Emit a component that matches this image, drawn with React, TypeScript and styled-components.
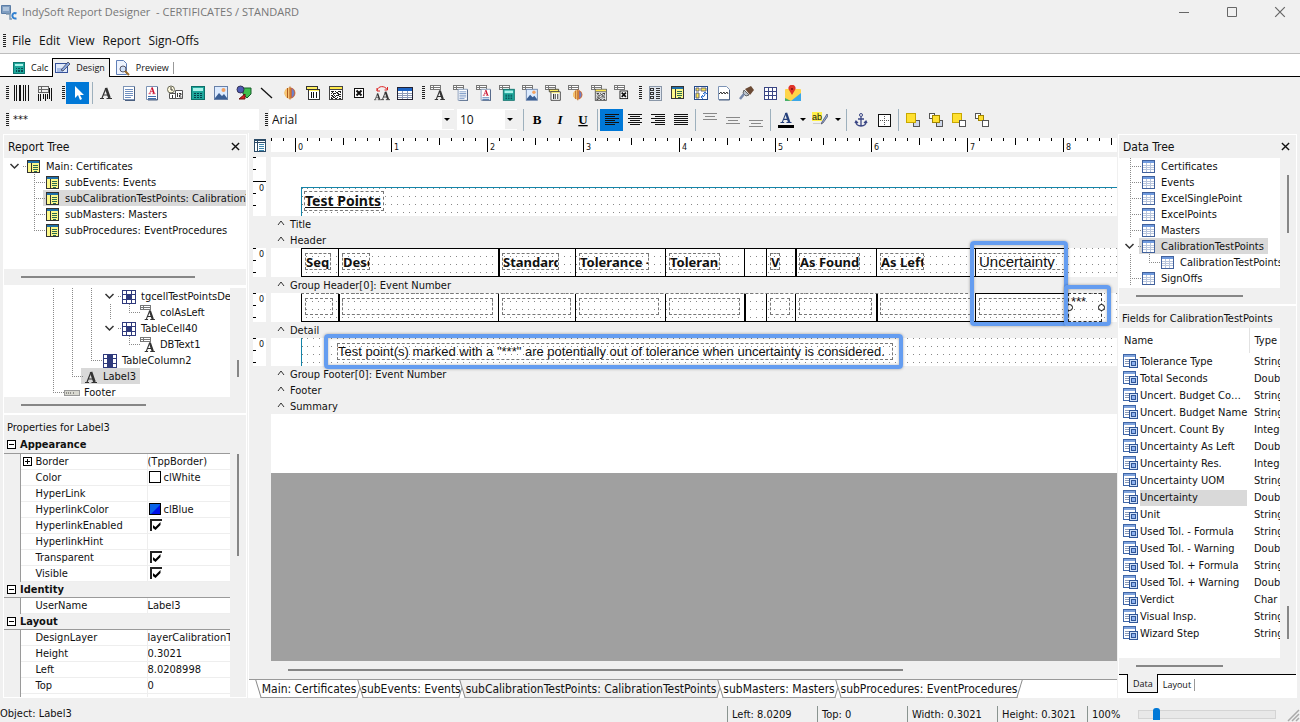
import React from "react";
import styled, { createGlobalStyle, css } from "styled-components";

const ui = `"DejaVu Sans Condensed", "DejaVu Sans", sans-serif`;
const chrome = `"Open Sans", "Noto Sans", sans-serif`;

const GlobalStyle = createGlobalStyle`
  * { box-sizing: border-box; }
  body { margin: 0; background: #f0f0f0; color: #111; font: 11px/16px ${ui}; }
  button, input, select { font: inherit; color: inherit; margin: 0; padding: 0; border: 0; background: none; border-radius: 0; }
`;

/* ---------- shell ---------- */

const Window = styled.div`
  display: flex;
  flex-direction: column;
  height: 100vh;
  min-height: 600px;
  overflow: hidden;
`;

const TitleBar = styled.header`
  display: flex;
  align-items: center;
  flex: none;
  height: 28px;
  padding-bottom: 4px;
  color: #777;
  font: 11px/18px ${chrome};
`;

const TitleText = styled.h1`
  flex: 1;
  margin: 0 0 0 4px;
  font: inherit;
  white-space: pre;
`;

const WindowButton = styled.button`
  display: flex;
  align-items: center;
  justify-content: center;
  width: 48px;
  height: 24px;
  color: #666;
`;

const WindowButtons = styled.div`
  display: flex;
  margin-right: -4px;
`;

const MenuBar = styled.nav`
  display: flex;
  align-items: center;
  flex: none;
  height: 26px;
  border-bottom: 1px solid #bdbdbd;
  font: 12px/18px ${chrome};
`;

const MenuItem = styled.button`
  padding: 0 4px;
`;

const Grip = styled.span<{ $short?: boolean }>`
  flex: none;
  width: 3px;
  height: 14px;
  margin: 0 1px 0 6px;
  background: repeating-linear-gradient(#222 0 1px, transparent 1px 2px);
  ${(p) => p.$short && css`margin: 0 2px 0 3px;`}
`;

const ViewTabs = styled.div`
  display: flex;
  align-items: flex-end;
  flex: none;
  height: 23px;
  padding-left: 7px;
  background: #fff;
  border-bottom: 1px solid #000;
  font: 9px/14px ${chrome};
`;

const ViewTab = styled.button<{ $active?: boolean }>`
  display: flex;
  align-items: center;
  gap: 5px;
  height: 18px;
  padding: 1px 4px 0 5px;
  ${(p) =>
    p.$active &&
    css`
      margin-bottom: -1px;
      height: 19px;
      padding: 0 4px 1px 2px;
      background: #f0f0f0;
      border: 1px solid #000;
      border-bottom: 0;
    `}
`;

const TabDivider = styled.span`
  width: 1px;
  height: 12px;
  margin-bottom: 2px;
  background: #999;
`;

const Toolbars = styled.div`
  flex: none;
  padding-top: 2px;
`;

const Toolbar = styled.div`
  display: flex;
  align-items: center;
  height: 27px;
`;

const ToolButton = styled.button<{ $on?: boolean; $w?: number }>`
  display: flex;
  align-items: center;
  justify-content: center;
  flex: none;
  width: ${(p) => p.$w ?? 23}px;
  height: 22px;
  background: ${(p) => (p.$on ? "#0078d7" : "transparent")};
`;

const Separator = styled.span<{ $w?: number }>`
  flex: none;
  width: 1px;
  height: 22px;
  margin: 0 ${(p) => ((p.$w ?? 5) === 5 ? 1 : 2)}px 0 3px;
  background: #9db0bd;
`;

const TextEdit = styled.input`
  flex: none;
  width: 249px;
  height: 21px;
  padding: 0 3px;
  background: #fff;
  font-size: 11px;
`;

const Combo = styled.span<{ $w: number }>`
  position: relative;
  flex: none;
  width: ${(p) => p.$w}px;
  height: 21px;
  margin-right: 3px;
  background: #fff;
  font: 12px/20px ${chrome};
  select {
    width: 100%;
    height: 21px;
    padding-left: 3px;
    appearance: none;
  }
  &::before {
    content: "";
    position: absolute;
    right: 0;
    top: 1px;
    width: 12px;
    height: 19px;
    background: #f0f0f0;
    pointer-events: none;
  }
  &::after {
    content: "";
    position: absolute;
    right: 4px;
    top: 9px;
    border: 3px solid transparent;
    border-top-color: #000;
    border-bottom: 0;
    pointer-events: none;
  }
`;

const DropArrow = styled.span`
  border: 3px solid transparent;
  border-top-color: #000;
  border-bottom: 0;
`;

const Main = styled.main`
  display: flex;
  flex: 1;
  min-height: 0;
`;

/* ---------- side panels ---------- */

const Side = styled.aside<{ $w: number }>`
  display: flex;
  flex-direction: column;
  flex: none;
  width: ${(p) => p.$w}px;
  margin: 1px 3px 4px;
  border: 1px solid #fff;
  &:first-child { margin-right: 0; }
  &:last-child { margin-left: 0; }
`;

const PanelTitle = styled.h2`
  display: flex;
  align-items: center;
  justify-content: space-between;
  flex: none;
  height: 23px;
  margin: 0;
  padding: 0 4px;
  font: 12px/16px ${ui};
`;

const SubTitle = styled(PanelTitle)`
  height: 22px;
  padding: 3px 3px 0;
  font-size: 11px;
`;

const CloseButton = styled.button`
  display: flex;
  align-items: center;
  justify-content: center;
  width: 14px;
  height: 14px;
`;

const ScrollArea = styled.div<{ $h?: number }>`
  display: flex;
  min-height: 0;
  ${(p) => (p.$h ? css`flex: none; height: ${p.$h}px;` : css`flex: 1;`)}
`;

const Viewport = styled.div<{ $bg?: string }>`
  flex: 1;
  min-width: 0;
  overflow: hidden;
  background: ${(p) => p.$bg ?? "#fff"};
`;

const VTrack = styled.div`
  flex: none;
  width: 16px;
`;

const VThumb = styled.div<{ $top: number; $h: number }>`
  width: 2px;
  height: ${(p) => p.$h}px;
  margin: ${(p) => p.$top}px 0 0 7px;
  background: #868686;
`;

const HTrack = styled.div<{ $h?: number; $line?: number }>`
  display: flex;
  align-items: center;
  flex: none;
  height: ${(p) => p.$h ?? 16}px;
  ${(p) => p.$line && css`border-bottom: ${p.$line}px solid #fff;`}
`;

const HThumb = styled.div<{ $left: number; $w: string }>`
  height: 2px;
  width: ${(p) => p.$w};
  margin-left: ${(p) => p.$left}px;
  background: #868686;
`;

const Tree = styled.ul`
  margin: 0;
  padding: 0;
  list-style: none;
`;

const TreeRow = styled.li`
  display: flex;
  height: 16px;
  white-space: nowrap;
`;

const dots = (dir: string) => `repeating-linear-gradient(${dir}, #8a8a8a 0 1px, transparent 1px 2px)`;

const Guide = styled.span<{ $kind: string }>`
  position: relative;
  display: flex;
  align-items: center;
  flex: none;
  width: 19px;
  padding-left: 4px;
  &::before {
    content: "";
    position: absolute;
    left: 10px;
    top: 0;
    width: 1px;
    height: ${(p) => (p.$kind === "|" || p.$kind === "+" ? 16 : p.$kind === "L" ? 8 : 0)}px;
    background: ${dots("to bottom")};
  }
  &::after {
    content: "";
    position: absolute;
    z-index: 1;
    left: ${(p) => (p.$kind === "v" ? 18 : 10)}px;
    top: 8px;
    width: ${(p) => (p.$kind === "v" ? 4 : p.$kind === "+" || p.$kind === "L" ? 11 : 0)}px;
    height: 1px;
    background: ${dots("to right")};
  }
`;

const NodeLabel = styled.span<{ $on?: boolean; $fill?: boolean }>`
  display: flex;
  align-items: center;
  gap: 4px;
  height: 16px;
  padding: 1px 4px 0 2px;
  line-height: 18px;
  background: ${(p) => (p.$on ? "#d9d9d9" : "transparent")};
  ${(p) => p.$fill && css`flex: 1;`}
`;

const TreeBox = styled.div`
  padding-left: 1px;
`;

/* ---------- property grid ---------- */

const PropTable = styled.table`
  width: 100%;
  border-collapse: collapse;
  table-layout: fixed;
  th, td {
    height: 16px;
    padding: 0;
    font-weight: normal;
    line-height: 15px;
    text-align: left;
    white-space: nowrap;
    overflow: hidden;
  }
`;

const GroupCell = styled.th`
  && {
    background: #f0f0f0;
    font: bold 11px/15px ${ui};
    border-bottom: 1px solid #9a9a9a;
  }
`;

const GroupInner = styled.span`
  display: flex;
  align-items: center;
  gap: 4px;
  padding-left: 3px;
`;

const Gutter = styled.td`
  background: #f0f0f0;
  border-right: 1px solid #9a9a9a;
`;

const NameCell = styled.th`
  background: #fff;
  border-bottom: 1px solid #eee;
`;

const NameInner = styled.span`
  display: flex;
  align-items: center;
  > span { display: flex; width: 15px; padding-left: 2px; }
`;

const ValueCell = styled.td`
  background: #fff;
  border-left: 1px solid #eee;
  border-bottom: 1px solid #eee;
`;

const ValueInner = styled.span`
  display: flex;
  align-items: center;
  gap: 3px;
`;

const Toggle = styled.i`
  display: flex;
  align-items: center;
  justify-content: center;
  flex: none;
  width: 9px;
  height: 9px;
  border: 1px solid #000;
  background: #fff;
`;

const Swatch = styled.span<{ $c: string }>`
  width: 12px;
  height: 12px;
  margin-left: 1px;
  border: 1px solid #000;
  background: ${(p) => p.$c};
`;

const Check = styled.input`
  appearance: none;
  display: grid;
  place-items: center;
  width: 12px;
  height: 12px;
  margin-left: 2px;
  background: #fff;
  border-style: solid;
  border-width: 2px 0 0 2px;
  border-color: #222;
  &:checked::before {
    content: "";
    width: 8px;
    height: 8px;
    background: #000;
    clip-path: polygon(0 35%, 38% 62%, 100% 0, 100% 38%, 38% 100%, 0 72%);
  }
`;

/* ---------- field list ---------- */

const FieldTable = styled.table`
  width: 100%;
  border-collapse: collapse;
  table-layout: fixed;
  th, td {
    height: 17px;
    padding: 0;
    font-weight: normal;
    text-align: left;
    white-space: nowrap;
    overflow: hidden;
  }
  thead th { height: 25px; padding-left: 5px; }
  thead th + th { border-left: 1px solid #e2e2e2; }
  td + td { padding-left: 5px; }
`;

const FieldName = styled.span<{ $on?: boolean }>`
  display: flex;
  align-items: center;
  height: 17px;
  padding-left: 4px;
  margin-right: 2px;
  gap: 1px;
  span { flex: 1; height: 16px; background: ${(p) => (p.$on ? "#d9d9d9" : "transparent")}; }
`;

const PaneTabs = styled.div`
  display: flex;
  flex: none;
  height: 23px;
  padding-left: 8px;
  background: #fff;
  border-top: 1px solid #000;
  font: 9px/14px ${chrome};
`;

const PaneTab = styled.button<{ $active?: boolean }>`
  height: 18px;
  padding: 1px 4px 0 5px;
  ${(p) =>
    p.$active
      ? css`margin-top: -1px; height: 19px; padding: 2px 4px 0 5px; background: #f0f0f0; border: 1px solid #000; border-top: 0;`
      : css`&::after { content: ""; display: inline-block; width: 1px; height: 12px; margin-left: 3px; vertical-align: middle; background: #999; }`}
`;

/* ---------- designer ---------- */

const Designer = styled.section`
  position: relative;
  display: flex;
  flex-direction: column;
  flex: 1;
  min-width: 0;
  margin: 0 1px 4px 1px;
  border-left: 1px solid #fff;
  overflow: hidden;
`;

const RulerRow = styled.div`
  display: flex;
  flex: none;
  padding: 5px 0 5px 4px;
  height: 24px;
`;

const HRuler = styled.div`
  flex: 1;
  min-width: 0;
  margin-left: 4px;
  background: #fff;
  overflow: hidden;
`;

const Band = styled.div`
  display: flex;
  flex: none;
  padding-left: 4px;
`;

const VRuler = styled.div<{ $lead?: boolean }>`
  flex: none;
  width: 13px;
  margin-right: 5px;
  padding-top: ${(p) => (p.$lead ? 24 : 0)}px;
  background: repeating-linear-gradient(#000 0 1px, transparent 1px 12px) 0 0 / 3px 100% no-repeat, #fff;
  font: 8px/14px "DejaVu Sans", sans-serif;
  text-align: right;
  span { display: block; padding-right: 2px; ${(p) => p.$lead && css`border-top: 1px solid #000;`} }
`;

const BandBody = styled.div`
  flex: 1;
  min-width: 0;
  background: #fff;
`;

const PageMargin = styled.div`
  height: 30px;
`;

/* snap grid: vertical hairlines masked by white rows leave single dots */
const Surface = styled.div<{ $h?: number; $top?: boolean; $edge?: boolean }>`
  display: flex;
  align-items: flex-start;
  height: ${(p) => p.$h ?? 29}px;
  margin-left: 30px;
  ${(p) => p.$top && css`border-top: 1px solid #1484a8;`}
  ${(p) => p.$edge && css`border-left: 1px solid #1484a8;`}
  background:
    linear-gradient(transparent 0 1px, #fff 1px) 0 0 / 100% 8px,
    repeating-linear-gradient(90deg, #888 0 1px, #fff 1px 6px) 5px 0;
  background-origin: padding-box;
  background-clip: padding-box;
`;

const BandLabel = styled.div`
  display: flex;
  align-items: center;
  gap: 5px;
  flex: none;
  height: 16px;
  padding: 1px 0 0 28px;
  line-height: 18px;
`;

const Cells = styled.div<{ $detail?: boolean }>`
  display: flex;
  height: 29px;
  border-top: 1px ${(p) => (p.$detail ? "dashed #777" : "solid #000")};
  border-bottom: 1px solid #000;
  border-right: 1px solid #000;
`;

const Cell = styled.div<{ $w: number; $heavy?: boolean; $lid?: boolean }>`
  width: ${(p) => p.$w}px;
  padding: 4px 0 0 ${(p) => (p.$heavy ? 2 : 3)}px;
  border-left: ${(p) => (p.$heavy ? 2 : 1)}px solid #000;
  ${(p) => p.$lid && css`margin-top: -1px; padding-top: 4px; border-top: 1px solid #000;`}
`;

const Field = styled.div<{ $w: number }>`
  width: ${(p) => p.$w}px;
  height: 17px;
  border: 1px dashed #777;
  overflow: hidden;
  white-space: nowrap;
  font: bold 13px/16px "Noto Sans", sans-serif;
`;

const PlainField = styled(Field)`
  font: 15px/16px "Liberation Sans", sans-serif;
  border-left: 0;
`;

const TitleField = styled(Field)`
  height: 20px;
  margin: 3px 0 0 2px;
  font-size: 14px;
  line-height: 18px;
  text-decoration: underline;
`;

const NoteField = styled(Field)`
  margin: 5px 0 0 35px;
  font: 13px/16px "Liberation Sans", sans-serif;
`;

const MarkerField = styled.div`
  display: flex;
  align-items: center;
  width: 34px;
  height: 29px;
  border: 1px dashed #333;
  font: 13px/15px "Liberation Sans", sans-serif;
  span { flex: 1; align-self: flex-start; }
`;

const Handle = styled.i`
  flex: none;
  width: 7px;
  height: 7px;
  margin-right: -4px;
  border: 1px solid #000;
  border-radius: 50%;
  background: #fff;
  &:first-child { margin: 0 -2px 0 -3px; }
`;

const Paper = styled.div`
  flex: none;
  height: 59px;
  margin-left: 22px;
  background: #fff;
`;

const Desk = styled.div`
  flex: 1;
  min-height: 40px;
  margin-left: 22px;
  background: #a0a0a0;
`;

const Callout = styled.div<{ $x: number; $y: number; $w: number; $h: number }>`
  position: absolute;
  left: ${(p) => p.$x}px;
  top: ${(p) => p.$y}px;
  width: ${(p) => p.$w}px;
  height: ${(p) => p.$h}px;
  border: 4px solid #659df0;
  border-radius: 4px;
  box-shadow: 0 0 3px rgba(0, 0, 0, 0.35), inset 0 0 3px rgba(0, 0, 0, 0.3);
  pointer-events: none;
`;

const SheetTabs = styled.div`
  display: flex;
  flex: none;
  height: 19px;
  padding-left: 9px;
  background: #fff;
  border-top: 1px solid #999;
  font-size: 12px;
`;

const SheetTab = styled.button<{ $w: number; $on?: boolean }>`
  position: relative;
  z-index: 0;
  width: ${(p) => p.$w}px;
  height: 18px;
  white-space: nowrap;
  line-height: 16px;
  &::before, &::after {
    content: "";
    position: absolute;
    z-index: -1;
    top: 0;
    bottom: 0;
    width: 50%;
    background: ${(p) => (p.$on ? "#f0f0f0" : "#fff")};
    border-bottom: 1px solid #999;
  }
  &::before { left: 0; transform: skewX(17deg); border-left: 1px solid #888; }
  &::after { right: 0; transform: skewX(-17deg); border-right: 1px solid #888; }
`;

/* ---------- status bar ---------- */

const StatusBar = styled.footer`
  display: flex;
  align-items: center;
  flex: none;
  height: 20px;
  padding-top: 4px;
  font-size: 11px;
`;

const StatusText = styled.span`
  flex: 1;
`;

const StatusCell = styled.span<{ $w?: number }>`
  flex: none;
  width: ${(p) => p.$w ?? 90}px;
  height: 17px;
  padding-left: 4px;
  border-left: 1px solid #8a9490;
  line-height: 18px;
  white-space: nowrap;
`;

const Zoom = styled.input`
  appearance: none;
  width: 138px;
  height: 12px;
  margin-right: 8px;
  &::-webkit-slider-runnable-track {
    height: 9px;
    background: #e8e8e8;
    border: 1px solid #d4d4d4;
  }
  &::-webkit-slider-thumb {
    appearance: none;
    width: 7px;
    height: 12px;
    margin-top: -3px;
    border-radius: 3px 3px 0 0;
    background: #0078d7;
  }
`;

/* ---------- icons ---------- */

const Glyph = styled.svg`
  display: block;
  flex: none;
`;

const Icon = ({ children, size = 16, crisp }: { children: React.ReactNode; size?: number; crisp?: boolean }) => (
  <Glyph width={size} height={size} viewBox="0 0 16 16" fill="none" shapeRendering={crisp ? "crispEdges" : "auto"} aria-hidden="true">
    {children}
  </Glyph>
);

/* the text tool's mark: thin left leg, heavy right leg */
const capA = (x: number, y: number, s: number, fill = "#333") => (
  <g transform={`translate(${x - s / 2} ${y - s}) scale(${s / 12})`}>
    <path d="M6 1L2 11M3.500 8h4.500" stroke={fill} strokeWidth="1.200" />
    <path d="M6 1l3.500 10" stroke={fill} strokeWidth="2.600" />
    <path d="M0 11.500h4M6.500 11.500h5.500" stroke={fill} strokeWidth="1.200" />
  </g>
);

const art = {
  barcode: <path d="M0.500 0v16M2.500 0v16M5.500 0v16M6.500 0v16M9.500 0v16M11.500 0v16M14.500 0v16" stroke="#111" />,
  barcodeTable: (
    <>
      <path d="M1.500 1.500h10v6h-10zM1 4.500h11M4.500 1v7" stroke="#666" />
      <path d="M1.500 9v7M3.500 9v7M6.500 9v5M8.500 9v7M10.500 9v5M12.500 3v11M14.500 3v13" stroke="#111" />
    </>
  ),
  pointer: <path d="M5 1v12l3-3 2 5 2-1-2-4h4z" fill="#fff" />,
  letter: capA(8, 14, 12),
  memo: (
    <>
      <path d="M2.500 1.500h11v13h-11z" fill="#fff" stroke="#7c93b5" />
      <path d="M4 4.500h8M4 6.500h8M4 8.500h8M4 10.500h8M4 12.500h6" stroke="#6f8fc0" />
      <path d="M13.500 2v13H4" stroke="#4a5f80" />
    </>
  ),
  rich: (
    <>
      <path d="M2.500 1.500h11v13h-11z" fill="#fff" stroke="#7c93b5" />
      {capA(8, 9, 7, "#c8102e")}
      <path d="M4 11.500h8M4 13.500h8" stroke="#3f6fae" />
      <path d="M13.500 2v13H4" stroke="#4a5f80" />
    </>
  ),
  system: (
    <>
      <circle cx="4" cy="4.500" r="3.500" fill="#fffbe0" stroke="#665" />
      <path d="M4 2v3h2" stroke="#333" />
      <path d="M2.500 8.500h6v5h-6zM8.500 5.500h7v8h-7z" fill="#fff" stroke="#555" />
      <path d="M10.500 8v4M12 8.500h2v1.500h-1.500v2H14.500M5.500 10v3" stroke="#333" />
    </>
  ),
  calc: (
    <>
      <rect x="1.500" y="1.500" width="13" height="13" fill="#1fa79b" stroke="#0d6f69" />
      <rect x="3" y="3" width="10" height="3" fill="#a9f2ea" />
      <path d="M4 8.500h2M7 8.500h2M10 8.500h2M4 10.500h2M7 10.500h2M10 10.500h2M4 12.500h2M7 12.500h2M10 12.500h2" stroke="#063f4a" />
    </>
  ),
  image: (
    <>
      <rect x="1.500" y="1.500" width="13" height="13" fill="#dcebff" stroke="#6780a8" />
      <path d="M2 13l4-5 3 3 2-2 3 4v1H2z" fill="#3a5f95" />
      <circle cx="10.500" cy="5" r="2" fill="#f4a261" />
    </>
  ),
  shapes: (
    <>
      <path d="M7 3h8v6l-4 4-4-4z" fill="#3fc04f" stroke="#165c2a" />
      <path d="M3 14l6-5v5z" fill="#d22" stroke="#611" />
      <circle cx="4.500" cy="4.500" r="3.500" fill="#4f5bb5" stroke="#335" />
    </>
  ),
  line: <path d="M2 3l11 10" stroke="#111" strokeWidth="1.300" />,
  chart: (
    <>
      <circle cx="8" cy="8" r="5.500" fill="#f0a030" />
      <path d="M8 2.500a5.500 5.500 0 0 0 0 11z" fill="#f7c774" />
      <path d="M5.500 3v10M8 1.500v13" stroke="#b05a20" />
      <path d="M9.500 3a5.500 5.500 0 0 1 0 10z" fill="#6b84c8" stroke="#c0504d" strokeWidth="0.700" />
    </>
  ),
  tableCode: (
    <>
      <path d="M1.500 1.500h11v3h-11z" fill="#ffef60" stroke="#333" />
      <path d="M3.500 4.500h11v10h-11z" fill="#fff" stroke="#333" />
      <path d="M4 5.500h10" stroke="#ffef60" />
      <path d="M6.500 7v6M8.500 7v6M11.500 7v6" stroke="#111" />
    </>
  ),
  code2d: (
    <>
      <rect x="1.500" y="1.500" width="13" height="13" fill="#fff" stroke="#444" />
      <path d="M2 3h12" stroke="#ffe94a" strokeWidth="2" />
      <path d="M2 4.500h12" stroke="#444" />
      <path d="M3 6.500h3M7 6.500h1M10 6.500h3M4 7.500h1M8 7.500h2M12 7.500h1M3 8.500h1M5 8.500h3M9 8.500h2M5 9.500h1M10 9.500h3M3 10.500h2M6 10.500h1M8 10.500h3M4 11.500h2M7 11.500h1M11 11.500h2M3 12.500h1M5 12.500h2M9 12.500h1M3 13.500h2M7 13.500h2M11 13.500h2" stroke="#222" />
    </>
  ),
  check: (
    <>
      <rect x="3.500" y="3.500" width="9" height="9" fill="#fff" stroke="#111" />
      <path d="M5.500 5.500l5 5M10.500 5.500l-5 5" stroke="#111" strokeWidth="2" />
    </>
  ),
  variable: (
    <>
      {capA(3.5, 15, 7)}
      {capA(11.5, 15, 9)}
      <path d="M3 5.500c1-5 8-5 10-1M13.500 5V2M13.500 5h-3M3 6V3M3 6h3" stroke="#d22" />
    </>
  ),
  grid: (
    <>
      <rect x="0.500" y="2.500" width="15" height="12" fill="#fff" stroke="#223" />
      <path d="M1 4.500h14" stroke="#1b62c4" strokeWidth="3" />
      <path d="M1 8.500h14M1 10.500h14M1 12.500h14M5.500 6v8M10.500 6v8" stroke="#8d9bb8" />
    </>
  ),
  report: (
    <>
      <rect x="1.500" y="1.500" width="12" height="12" fill="#fdf88a" stroke="#333" />
      <path d="M2 3h11" stroke="#1f6fa8" strokeWidth="2" />
      <path d="M5.500 4v9" stroke="#333" />
      <path d="M7 6.500h5M7 8.500h5M7 10.500h5M8 12.500h3" stroke="#2c6b50" />
    </>
  ),
  columns: (
    <>
      <rect x="2" y="1" width="12" height="14" fill="#dfe5ee" stroke="#8a97a8" />
      <path d="M3.500 3.500h3v2h-3zM3.500 7.500h3v2h-3zM3.500 11.500h3v2h-3zM9 3.500h4M9 5.500h4M9 7.500h4M9 9.500h4M9 11.500h4M9 13.500h4" stroke="#333" />
    </>
  ),
  cross: (
    <>
      <rect x="1.500" y="1.500" width="13" height="13" fill="#fff" stroke="#234a8a" />
      <path d="M3 3h3v3H3zM3 8h3v5H3zM8 3h5v3H8z" fill="#ffe94a" stroke="#667" />
      <path d="M12 8c0 3-1 4-4 4M12 7l2 2M12 7l-2 2M8 12l2-2M8 12l2 2" stroke="#2b6fd0" />
    </>
  ),
  pageBreak: (
    <>
      <path d="M2.500 1.500h8l3 3v10h-11z" fill="#fff" stroke="#7c93b5" />
      <path d="M3 9l2-2 1 2 2-2 1 2 2-2 1 2" stroke="#333" />
      <path d="M13.500 5v10H3" stroke="#4a5f80" />
    </>
  ),
  brush: (
    <>
      <path d="M6 4l6-3 3 4-4 5z" fill="#6b4a35" />
      <path d="M5 5l5 5-3 1-3-3z" fill="#b9c2cc" stroke="#666" />
      <path d="M5 9l-4 5" stroke="#7788aa" strokeWidth="2.500" />
    </>
  ),
  sheet: (
    <>
      <rect x="2.500" y="2.500" width="12" height="12" fill="#fff" stroke="#3a4684" />
      <path d="M2 6.500h13M2 10.500h13M6.500 2v13M10.500 2v13" stroke="#3a4684" />
    </>
  ),
  map: (
    <>
      <rect x="0" y="4" width="16" height="12" rx="1" fill="#ffd54a" />
      <path d="M6 16l10-8v8z" fill="#3aa7e8" />
      <path d="M0 13l6 3H0z" fill="#49b06a" />
      <path d="M7 10L4 5a3.500 3.500 0 1 1 6 0z" fill="#e0342a" />
      <circle cx="7" cy="4" r="1" fill="#7d120c" />
    </>
  ),
  field: (
    <>
      <rect x="0.500" y="0.500" width="12" height="12" fill="#fff" stroke="#3f66a8" />
      <path d="M1 2h11" stroke="#7fa3dc" strokeWidth="2" />
      <path d="M2 5.500h9M2 7.500h4M2 9.500h4" stroke="#8a9ab8" />
      <rect x="6.500" y="5.500" width="8" height="8" fill="#cfe0f8" stroke="#2f5597" />
      <rect x="8.500" y="7.500" width="4" height="4" fill="#8fb2ee" stroke="#2f5597" />
    </>
  ),
  dataset: (
    <>
      <rect x="1.500" y="1.500" width="12" height="12" fill="#fff" stroke="#41619c" />
      <path d="M2 3h11" stroke="#6f9ade" strokeWidth="2" />
      <path d="M2 6.500h11M2 8.500h11M2 10.500h11M5.500 4v9M9.500 4v9" stroke="#b9c6dd" />
    </>
  ),
  tableCell: (
    <>
      <path d="M1.500 1.500h13v13h-13zM1 5.500h14M1 10.500h14M5.500 1v14M10.500 1v14" fill="#fff" stroke="#2f3a7c" />
      <rect x="6" y="6" width="4" height="4" fill="#2f3a7c" />
    </>
  ),
  tableColumn: (
    <>
      <path d="M1.500 1.500h13v13h-13zM1 5.500h14M1 10.500h14M5.500 1v14M10.500 1v14" fill="#fff" stroke="#2f3a7c" />
      <rect x="5" y="1" width="6" height="14" fill="#2f3a7c" />
    </>
  ),
  footer: (
    <>
      <rect x="0.500" y="5.500" width="15" height="5" fill="#d8d8d0" stroke="#999" />
      <path d="M2 8h1M4 8h1M6 8h1M9 8h1" stroke="#444" />
    </>
  ),
  anchor: (
    <>
      <circle cx="8" cy="3" r="1.500" stroke="#3a4684" />
      <path d="M8 5v9M5 7h6M3 9.500c0 3 2 4.500 5 4.500s5-1.500 5-4.500M2 11l1-2 2 2M14 11l-1-2-2 2" stroke="#3a4684" strokeWidth="1.300" />
    </>
  ),
  border: (
    <>
      <rect x="2.500" y="2.500" width="12" height="12" fill="#fff" stroke="#111" />
      <path d="M8.500 4v10M4 8.500h10" stroke="#555" strokeDasharray="1 1" />
    </>
  ),
  fontColor: (
    <>
      {capA(8, 11, 11, "#25407c")}
      <rect x="0" y="13" width="16" height="3" fill="#000" />
    </>
  ),
  highlight: (
    <>
      <rect x="0" y="0" width="10" height="9" fill="#fff04a" />
      <text x="0" y="8" fontSize="9" fontFamily="Liberation Sans, sans-serif" fill="#111">ab</text>
      <path d="M15 2l-5 8-1 2 2-1 5-7z" fill="#8fa9dd" stroke="#445" strokeWidth="0.700" />
      <rect x="1" y="11" width="7" height="1" fill="#ccc" />
    </>
  ),
};

type ArtName = keyof typeof art;

const crispSet = new Set<ArtName>(["barcode", "barcodeTable", "memo", "calc", "tableCode", "code2d", "grid", "report", "columns", "sheet", "field", "dataset", "tableCell", "tableColumn", "border"]);

const Art = ({ name, size }: { name: ArtName; size?: number }) => (
  <Icon size={size} crisp={crispSet.has(name)}>{art[name]}</Icon>
);

/* data-aware variant: small table mark behind the base drawing */
const DataArt = ({ name }: { name: ArtName }) => (
  <Icon>
    <g shapeRendering="crispEdges">
      <path d="M0.500 0.500h10v4h-10zM0 2.500h11M3.500 0v5" fill="#fff" stroke="#777" />
    </g>
    <g transform="translate(3 3) scale(0.850)">{art[name]}</g>
  </Icon>
);

const Lines = ({ rows }: { rows: [number, number][] }) => (
  <Icon crisp>
    {rows.map(([a, b], i) => (
      <path key={i} d={`M${a} ${2 + i * 2}.500h${b - a}`} stroke="#111" />
    ))}
  </Icon>
);

const Stack = ({ front, small }: { front: boolean; small?: boolean }) => {
  const back = <rect x="8.500" y="8.500" width="6" height="6" fill={front ? "#cdd6ea" : "#fff"} stroke="#555" />;
  const yellow = small
    ? <rect x="4.500" y="3.500" width={front ? 7 : 5} height={front ? 7 : 5} fill="#ffe030" stroke="#a08400" />
    : <rect x="1.500" y="1.500" width="9" height="9" fill="#ffe030" stroke="#c8a800" />;
  return (
    <Icon>
      {small && <rect x="1.500" y="1.500" width="5" height="5" fill="#fff" stroke="#555" />}
      {front ? <>{back}{yellow}</> : <>{yellow}{back}</>}
    </Icon>
  );
};

const Cross = ({ s = 9, w = 1.5 }: { s?: number; w?: number }) => (
  <Glyph width={s} height={s} viewBox="0 0 10 10" aria-hidden="true">
    <path d="M1 1l8 8M9 1l-8 8" stroke="currentColor" strokeWidth={w} />
  </Glyph>
);

/* ---------- data ---------- */

type Node = { guides: string; icon: ArtName; db?: boolean; text: string; on?: boolean; fill?: boolean };

const reportTree: Node[] = [
  { guides: "v", icon: "report", text: "Main: Certificates" },
  { guides: " +", icon: "report", text: "subEvents: Events" },
  { guides: " +", icon: "report", text: "subCalibrationTestPoints: CalibrationTestPoints", on: true, fill: true },
  { guides: " +", icon: "report", text: "subMasters: Masters" },
  { guides: " L", icon: "report", text: "subProcedures: EventProcedures" },
];

const objectTree: Node[] = [
  { guides: "  |||v", icon: "tableCell", text: "tgcellTestPointsDetail" },
  { guides: "  ||||L", icon: "letter", db: true, text: "colAsLeft" },
  { guides: "  |||v", icon: "tableCell", text: "TableCell40" },
  { guides: "  ||| L", icon: "letter", db: true, text: "DBText1" },
  { guides: "  ||L", icon: "tableColumn", text: "TableColumn2" },
  { guides: "  |L", icon: "letter", text: "Label3", on: true },
  { guides: "  L", icon: "footer", text: "Footer" },
];

const dataTree: Node[] = [
  { guides: "+", icon: "dataset", text: "Certificates" },
  { guides: "+", icon: "dataset", text: "Events" },
  { guides: "+", icon: "dataset", text: "ExcelSinglePoint" },
  { guides: "+", icon: "dataset", text: "ExcelPoints" },
  { guides: "+", icon: "dataset", text: "Masters" },
  { guides: "v", icon: "dataset", text: "CalibrationTestPoints", on: true },
  { guides: "|L", icon: "dataset", text: "CalibrationTestPoints" },
  { guides: "+", icon: "dataset", text: "SignOffs" },
];

const properties: { group: string; rows: [string, string][] }[] = [
  {
    group: "Appearance",
    rows: [
      ["Border", "(TppBorder)"], ["Color", "clWhite"], ["HyperLink", ""], ["HyperlinkColor", "clBlue"],
      ["HyperlinkEnabled", "check"], ["HyperlinkHint", ""], ["Transparent", "check"], ["Visible", "check"],
    ],
  },
  { group: "Identity", rows: [["UserName", "Label3"]] },
  { group: "Layout", rows: [["DesignLayer", "layerCalibrationTestPoints"], ["Height", "0.3021"], ["Left", "8.0208998"], ["Top", "0"], ["Width", "0.3021"]] },
];

const fields: [string, string][] = [
  ["Tolerance Type", "String"], ["Total Seconds", "Double"], ["Uncert. Budget Co…", "String"], ["Uncert. Budget Name", "String"],
  ["Uncert. Count By", "Integer"], ["Uncertainty As Left", "Double"], ["Uncertainty Res.", "Integer"], ["Uncertainty UOM", "String"],
  ["Uncertainty", "Double"], ["Unit", "String"], ["Used Tol. - Formula", "String"], ["Used Tol. - Warning", "Double"],
  ["Used Tol. + Formula", "String"], ["Used Tol. + Warning", "Double"], ["Verdict", "Char"], ["Visual Insp.", "String"], ["Wizard Step", "String"],
];

const headerCells: { w: number; text?: string; field?: number; heavy?: boolean }[] = [
  { w: 37, text: "Seq", field: 26 }, { w: 160, text: "Desc", field: 28 }, { w: 77, text: "Standard", field: 57, heavy: true },
  { w: 90, text: "Tolerance -", field: 70 }, { w: 79, text: "Tolerance", field: 51 }, { w: 22 }, { w: 29, text: "V", field: 10 },
  { w: 81, text: "As Found", field: 61, heavy: true }, { w: 99, text: "As Left", field: 44 },
];

const detailCells: { w: number; field?: number; heavy?: boolean }[] = [
  { w: 37, field: 28 }, { w: 160, field: 151, heavy: true }, { w: 77, field: 69 }, { w: 90, field: 80 }, { w: 79, field: 71 },
  { w: 22, heavy: true }, { w: 29, field: 20 }, { w: 81, field: 73 }, { w: 99, field: 91, heavy: true },
];

const baseTools: ArtName[] = ["letter", "memo", "rich", "system", "calc", "image", "shapes", "line", "chart", "tableCode", "code2d", "check", "variable", "grid"];
const dataTools: ArtName[] = ["letter", "memo", "rich", "calc", "image", "tableCode", "chart", "code2d", "check"];
const advancedTools: ArtName[] = ["columns", "report", "cross", "pageBreak", "brush", "sheet", "map"];

const sheets: [string, number][] = [
  ["Main: Certificates", 102], ["subEvents: Events", 102], ["subCalibrationTestPoints: CalibrationTestPoints", 258],
  ["subMasters: Masters", 118], ["subProcedures: EventProcedures", 182],
];

/* ---------- pieces ---------- */

const TreeView = ({ nodes, label }: { nodes: Node[]; label: string }) => (
  <Tree aria-label={label}>
    {nodes.map((n, i) => (
      <TreeRow key={i}>
        {[...n.guides].map((g, k) => (
          <Guide key={k} $kind={g}>
            {g === "v" && (
              <Glyph width="11" height="8" viewBox="0 0 11 8" fill="none">
                <path d="M1.500 2l4 4 4-4" stroke="#333" strokeWidth="1.500" />
              </Glyph>
            )}
          </Guide>
        ))}
        <NodeLabel $on={n.on} $fill={n.fill}>
          {n.db ? <DataArt name={n.icon} /> : <Art name={n.icon} />}
          {n.text}
        </NodeLabel>
      </TreeRow>
    ))}
  </Tree>
);

const PropValue = ({ name, value }: { name: string; value: string }) => {
  if (value === "check") return <Check type="checkbox" defaultChecked aria-label={name} />;
  if (value === "clWhite") return <><Swatch $c="#fff" />{value}</>;
  if (value === "clBlue") return <><Swatch $c="linear-gradient(135deg, #0a63e8 50%, #0010e8 60%)" />{value}</>;
  return <>{value}</>;
};

const ToggleBox = ({ plus }: { plus?: boolean }) => (
  <Toggle>
    <Glyph width="5" height="5" viewBox="0 0 5 5" shapeRendering="crispEdges">
      <path d={plus ? "M0 2.500h5M2.500 0v5" : "M0 2.500h5"} stroke="#000" />
    </Glyph>
  </Toggle>
);

/* inch ruler, eighth-inch ticks; labels stop at the page's right edge (8.5in) */
const Ruler = () => (
  <Glyph width="1600" height="14" shapeRendering="crispEdges" aria-hidden="true">
    {Array.from({ length: 134 }, (_, i) => {
      const n = i - 2;
      const h = n % 8 === 0 ? 14 : n % 4 === 0 ? 7 : 3;
      return <path key={i} d={`M${i * 12 + 0.5} 0v${h}`} stroke="#000" />;
    })}
    {Array.from({ length: 9 }, (_, i) => (
      <text key={i} x={27 + i * 96} y="12" fontSize="8" fontFamily="DejaVu Sans, sans-serif" fill="#111">{i}</text>
    ))}
  </Glyph>
);

const Section = ({ children }: { children: string }) => (
  <BandLabel>
    <Glyph width="8" height="9" viewBox="0 0 8 9" fill="none"><path d="M1 5l3-4 3 4" stroke="#333" /></Glyph>
    {children}
  </BandLabel>
);

const SerifMark = ({ ch, italic, line }: { ch: string; italic?: boolean; line?: boolean }) => (
  <Icon>
    <text x="8" y="12" fontSize="13" fontWeight="bold" fontStyle={italic ? "italic" : "normal"} textDecoration={line ? "underline" : "none"} fontFamily="Liberation Serif, serif" textAnchor="middle" fill="#000">{ch}</text>
  </Icon>
);

export default function App() {
  return (
    <Window>
      <GlobalStyle />
      <TitleBar>
        <Glyph width="18" height="18" viewBox="0 0 18 18" fill="none">
          <path d="M1.500 2.500h9v8h-9z" fill="#7f9dc0" stroke="#5b7da6" />
          <path d="M3 5h6M3 7h6" stroke="#dce8f5" />
          <path d="M6 11h4v5h2" stroke="#8098b0" strokeWidth="1.500" />
          <path d="M16.500 10.500c-5-2.500-6 6 0 5" stroke="#2f7fd0" strokeWidth="2" />
        </Glyph>
        <TitleText>IndySoft Report Designer  - CERTIFICATES / STANDARD</TitleText>
        <WindowButtons>
          <WindowButton aria-label="Minimize"><Glyph width="10" height="10" viewBox="0 0 10 10"><path d="M0 5.500h10" stroke="currentColor" /></Glyph></WindowButton>
          <WindowButton aria-label="Maximize"><Glyph width="10" height="10" viewBox="0 0 10 10"><path d="M0.500 0.500h9v9h-9z" fill="none" stroke="currentColor" /></Glyph></WindowButton>
          <WindowButton aria-label="Close"><Cross s={12} w={1} /></WindowButton>
        </WindowButtons>
      </TitleBar>

      <MenuBar>
        <Grip $short />
        {["File", "Edit", "View", "Report", "Sign-Offs"].map((m) => <MenuItem key={m}>{m}</MenuItem>)}
      </MenuBar>

      <ViewTabs>
        <ViewTab><Art name="calc" size={14} />Calc</ViewTab>
        <ViewTab $active>
          <Icon>
            <rect x="0.500" y="3.500" width="12" height="9" fill="#dfe9fb" stroke="#35519a" />
            <path d="M2 9h6M2 11h6" stroke="#6f8fd0" />
            <path d="M6 10l7-8 2 2-7 7z" fill="#8aa7e0" stroke="#334" strokeWidth="0.700" />
          </Icon>
          Design
        </ViewTab>
        <ViewTab>
          <Icon>
            <path d="M1.500 0.500h7l3 3v11h-10z" fill="#eef4ff" stroke="#5f7fb8" />
            <circle cx="8" cy="9" r="3" fill="#cfe0f8" stroke="#556" />
            <path d="M10 11l4 4" stroke="#9a6a2a" strokeWidth="2" />
          </Icon>
          Preview
        </ViewTab>
        <TabDivider />
      </ViewTabs>

      <Toolbars>
        <Toolbar>
          <Grip />
          <ToolButton aria-label="Barcode"><Art name="barcode" /></ToolButton>
          <ToolButton aria-label="Data barcode"><Art name="barcodeTable" /></ToolButton>
          <Grip />
          <ToolButton $on aria-label="Select"><Art name="pointer" /></ToolButton>
          <Separator />
          {baseTools.map((t) => <ToolButton key={t} aria-label={t}><Art name={t} /></ToolButton>)}
          <Grip />
          {dataTools.map((t) => <ToolButton key={t} aria-label={`Data ${t}`}><DataArt name={t} /></ToolButton>)}
          <Grip />
          {advancedTools.map((t) => <ToolButton key={t} aria-label={t}><Art name={t} /></ToolButton>)}
        </Toolbar>
        <Toolbar>
          <Grip />
          <TextEdit aria-label="Caption" defaultValue="***" />
          <Grip />
          <Combo $w={185}><select aria-label="Font" defaultValue="Arial"><option>Arial</option></select></Combo>
          <Combo $w={60}><select aria-label="Font size" defaultValue="10"><option>10</option></select></Combo>
          <Separator />
          <ToolButton aria-label="Bold"><SerifMark ch="B" /></ToolButton>
          <ToolButton aria-label="Italic"><SerifMark ch="I" italic /></ToolButton>
          <ToolButton aria-label="Underline"><SerifMark ch="U" line /></ToolButton>
          <Separator $w={6} />
          <ToolButton $on aria-label="Align left"><Lines rows={[[1, 15], [1, 11], [1, 15], [1, 11], [1, 15], [1, 11]]} /></ToolButton>
          <ToolButton aria-label="Align center"><Lines rows={[[1, 15], [3, 13], [1, 15], [3, 13], [1, 15], [3, 13]]} /></ToolButton>
          <ToolButton aria-label="Align right"><Lines rows={[[1, 15], [5, 15], [1, 15], [5, 15], [1, 15], [5, 15]]} /></ToolButton>
          <ToolButton aria-label="Justify"><Lines rows={[[1, 15], [1, 15], [1, 15], [1, 15], [1, 15], [1, 15]]} /></ToolButton>
          <Separator $w={6} />
          <ToolButton aria-label="Align top"><Icon crisp><path d="M1 1.500h14M3 4.500h10M1 7.500h14" stroke="#888" /></Icon></ToolButton>
          <ToolButton aria-label="Align middle"><Icon crisp><path d="M1 5.500h14M3 8.500h10M1 11.500h14" stroke="#888" /></Icon></ToolButton>
          <ToolButton aria-label="Align bottom"><Icon crisp><path d="M1 8.500h14M3 11.500h10M1 14.500h14" stroke="#888" /></Icon></ToolButton>
          <Separator $w={6} />
          <ToolButton $w={25} aria-label="Font color"><Art name="fontColor" /></ToolButton>
          <ToolButton $w={10} aria-label="Font color options"><DropArrow /></ToolButton>
          <ToolButton $w={24} aria-label="Highlight color"><Art name="highlight" /></ToolButton>
          <ToolButton $w={11} aria-label="Highlight options"><DropArrow /></ToolButton>
          <Separator $w={6} />
          <ToolButton aria-label="Anchors"><Art name="anchor" /></ToolButton>
          <ToolButton aria-label="Border"><Art name="border" /></ToolButton>
          <Separator $w={6} />
          <ToolButton aria-label="Bring to front"><Stack front /></ToolButton>
          <ToolButton aria-label="Bring forward"><Stack front small /></ToolButton>
          <ToolButton aria-label="Send to back"><Stack front={false} /></ToolButton>
          <ToolButton aria-label="Send backward"><Stack front={false} small /></ToolButton>
        </Toolbar>
      </Toolbars>

      <Main>
        <Side $w={244}>
          <PanelTitle>Report Tree<CloseButton aria-label="Close Report Tree"><Cross /></CloseButton></PanelTitle>
          <ScrollArea $h={111}><Viewport><TreeBox><TreeView nodes={reportTree} label="Report Tree" /></TreeBox></Viewport></ScrollArea>
          <HTrack $h={19} $line={3}><HThumb $left={17} $w="174px" /></HTrack>
          <ScrollArea $h={109}>
            <Viewport><TreeBox><TreeView nodes={objectTree} label="Objects" /></TreeBox></Viewport>
            <VTrack><VThumb $top={72} $h={17} /></VTrack>
          </ScrollArea>
          <HTrack $h={18} $line={2}><HThumb $left={17} $w="125px" /></HTrack>
          <SubTitle>Properties for Label3</SubTitle>
          <ScrollArea>
            <Viewport $bg="#f0f0f0">
              <PropTable>
                <colgroup><col width="16" /><col width="127" /><col /></colgroup>
                <tbody>
                  {properties.map((g) => (
                    <React.Fragment key={g.group}>
                      <tr><GroupCell colSpan={3} scope="colgroup"><GroupInner><ToggleBox />{g.group}</GroupInner></GroupCell></tr>
                      {g.rows.map(([name, value]) => (
                        <tr key={name}>
                          <Gutter />
                          <NameCell scope="row"><NameInner><span>{name === "Border" && <ToggleBox plus />}</span>{name}</NameInner></NameCell>
                          <ValueCell><ValueInner><PropValue name={name} value={value} /></ValueInner></ValueCell>
                        </tr>
                      ))}
                    </React.Fragment>
                  ))}
                </tbody>
              </PropTable>
            </Viewport>
            <VTrack><VThumb $top={17} $h={102} /></VTrack>
          </ScrollArea>
        </Side>

        <Designer>
          <RulerRow>
            <Glyph width="14" height="14" viewBox="0 0 14 14" shapeRendering="crispEdges">
              <path d="M1.500 1.500h11v12h-11z" fill="#fff" stroke="#2b4a66" />
              <path d="M1 2.500h12M1 4.500h12M4.500 3v11" stroke="#2b4a66" />
              <path d="M6 6.500h5M6 8.500h5M6 10.500h5M6 12.500h5" stroke="#3f87b0" />
            </Glyph>
            <HRuler><Ruler /></HRuler>
          </RulerRow>
          <Band>
            <VRuler $lead><span>0</span></VRuler>
            <BandBody>
              <PageMargin />
              <Surface $top $edge><TitleField $w={80}>Test Points</TitleField></Surface>
            </BandBody>
          </Band>
          <Section>Title</Section>
          <Section>Header</Section>
          <Band>
            <VRuler><span>0</span></VRuler>
            <BandBody>
              <Surface>
                <Cells>
                  {headerCells.map((c, i) => <Cell key={i} $w={c.w} $heavy={c.heavy}>{c.field && <Field $w={c.field}>{c.text}</Field>}</Cell>)}
                  <Cell $w={92}><PlainField $w={86}>Uncertainty</PlainField></Cell>
                </Cells>
              </Surface>
            </BandBody>
          </Band>
          <Section>Group Header[0]: Event Number</Section>
          <Band>
            <VRuler><span>0</span></VRuler>
            <BandBody>
              <Surface>
                <Cells $detail>
                  {detailCells.map((c, i) => <Cell key={i} $w={c.w} $heavy={c.heavy}>{c.field && <Field $w={c.field} />}</Cell>)}
                  <Cell $w={92} $lid><Field $w={86} /></Cell>
                </Cells>
                <MarkerField><Handle /><span>***</span><Handle /></MarkerField>
              </Surface>
            </BandBody>
          </Band>
          <Section>Detail</Section>
          <Band>
            <VRuler><span>0</span></VRuler>
            <BandBody>
              <Surface $h={28} $edge>
                <NoteField $w={556}>Test point(s) marked with a "***" are potentially out of tolerance when uncertainty is considered.</NoteField>
              </Surface>
            </BandBody>
          </Band>
          <Section>Group Footer[0]: Event Number</Section>
          <Section>Footer</Section>
          <Section>Summary</Section>
          <Paper />
          <Desk />
          <HTrack $h={18}><HThumb $left={39} $w="615px" /></HTrack>
          <SheetTabs>
            {sheets.map(([t, w], i) => <SheetTab key={t} $w={w} $on={i === 2}>{t}</SheetTab>)}
          </SheetTabs>
          <Callout $x={721} $y={108} $w={98} $h={85} />
          <Callout $x={815} $y={152} $w={47} $h={41} />
          <Callout $x={75} $y={201} $w={579} $h={35} />
        </Designer>

        <Side $w={179}>
          <PanelTitle>Data Tree<CloseButton aria-label="Close Data Tree"><Cross /></CloseButton></PanelTitle>
          <ScrollArea $h={130}>
            <Viewport><TreeBox><TreeView nodes={dataTree} label="Data Tree" /></TreeBox></Viewport>
            <VTrack><VThumb $top={17} $h={58} /></VTrack>
          </ScrollArea>
          <HTrack $h={18} $line={2}><HThumb $left={17} $w="107px" /></HTrack>
          <SubTitle>Fields for CalibrationTestPoints</SubTitle>
          <ScrollArea>
            <Viewport>
              <FieldTable>
                <colgroup><col width="130" /><col /></colgroup>
                <thead><tr><th scope="col">Name</th><th scope="col">Type</th></tr></thead>
                <tbody>
                  {fields.map(([name, type]) => (
                    <tr key={name}>
                      <td><FieldName $on={name === "Uncertainty"}><Art name="field" /><span>{name}</span></FieldName></td>
                      <td>{type}</td>
                    </tr>
                  ))}
                </tbody>
              </FieldTable>
            </Viewport>
            <VTrack><VThumb $top={278} $h={33} /></VTrack>
          </ScrollArea>
          <HTrack $h={16}><HThumb $left={17} $w="87px" /></HTrack>
          <PaneTabs><PaneTab $active>Data</PaneTab><PaneTab>Layout</PaneTab></PaneTabs>
        </Side>
      </Main>

      <StatusBar>
        <StatusText>Object: Label3</StatusText>
        <StatusCell>Left: 8.0209</StatusCell>
        <StatusCell>Top: 0</StatusCell>
        <StatusCell>Width: 0.3021</StatusCell>
        <StatusCell>Height: 0.3021</StatusCell>
        <StatusCell $w={51}>100%</StatusCell>
        <Zoom type="range" min={0} max={100} defaultValue={11} aria-label="Zoom" />
        <Glyph width="16" height="16" viewBox="0 0 16 16"><path d="M15 4L4 15M15 8l-7 7M15 12l-3 3" stroke="#aaa" strokeWidth="1.500" /></Glyph>
      </StatusBar>
    </Window>
  );
}
